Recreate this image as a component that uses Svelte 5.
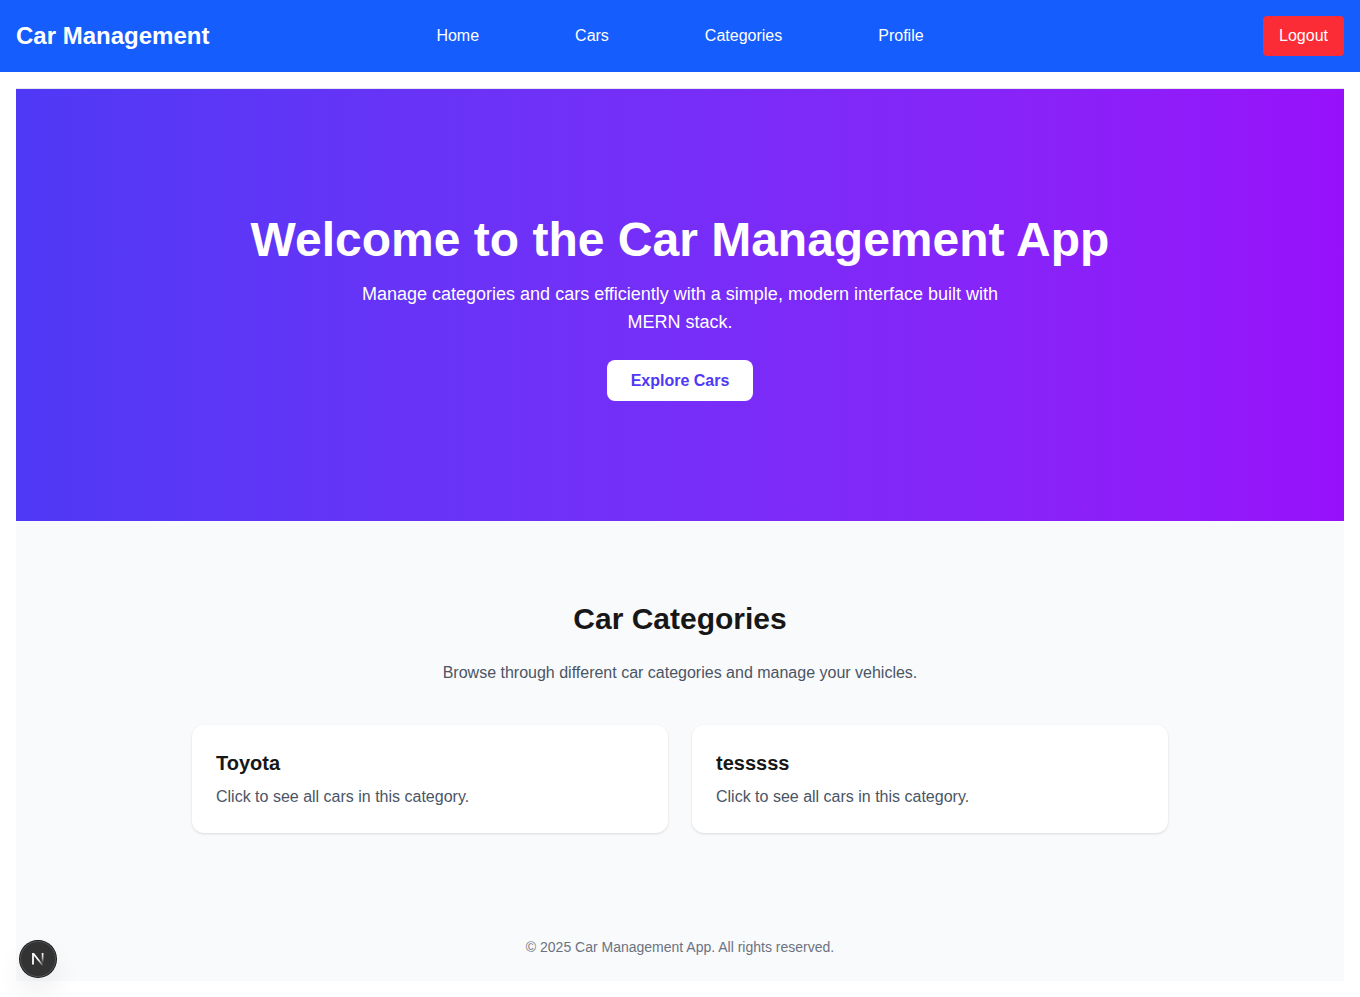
<script>
  const links = ['Home', 'Cars', 'Categories', 'Profile'];
  const categories = ['Toyota', 'tesssss'];
</script>

<nav class="navbar">
  <div class="brand">Car Management</div>
  <ul class="links">
    {#each links as link}
      <li><a href="#{link.toLowerCase()}">{link}</a></li>
    {/each}
  </ul>
  <button class="logout" type="button">Logout</button>
</nav>

<main class="page">
  <section class="hero">
    <h1>Welcome to the Car Management App</h1>
    <p>Manage categories and cars efficiently with a simple, modern interface built with MERN stack.</p>
    <a class="explore" href="#cars">Explore Cars</a>
  </section>

  <section class="categories">
    <h2>Car Categories</h2>
    <p class="intro">Browse through different car categories and manage your vehicles.</p>
    <div class="grid">
      {#each categories as category}
        <a class="card" href="#categories">
          <h3>{category}</h3>
          <p>Click to see all cars in this category.</p>
        </a>
      {/each}
    </div>
  </section>

  <footer>© 2025 Car Management App. All rights reserved.</footer>
</main>

<button class="devtools" type="button" aria-label="Open developer tools">
  <svg width="40" height="40" viewBox="0 0 40 40" fill="none" aria-hidden="true">
    <defs>
      <linearGradient id="stem" x1="0" y1="14" x2="0" y2="24" gradientUnits="userSpaceOnUse">
        <stop offset="0" stop-color="#fff" />
        <stop offset="0.4" stop-color="#fff" stop-opacity="0.75" />
        <stop offset="1" stop-color="#fff" stop-opacity="0" />
      </linearGradient>
      <linearGradient id="slant" x1="20" y1="21" x2="25" y2="27" gradientUnits="userSpaceOnUse">
        <stop offset="0" stop-color="#fff" />
        <stop offset="1" stop-color="#fff" stop-opacity="0.1" />
      </linearGradient>
    </defs>
    <path d="M14.2 14H16L25.6 26.2H23.6L15.4 16Z" fill="url(#slant)" />
    <path d="M15 25.5V14" stroke="#fff" stroke-width="1.8" />
    <path d="M24.6 14V25" stroke="url(#stem)" stroke-width="1.7" />
  </svg>
</button>

<style>
  :global(body) {
    margin: 0;
    background: #fff;
    color: #171717;
    font-family: Arial, "Liberation Sans", sans-serif;
    font-size: 16px;
    line-height: 24px;
  }

  h1, h2, h3, p, ul {
    margin: 0;
    padding: 0;
  }

  a {
    color: inherit;
    text-decoration: none;
  }

  .navbar {
    display: grid;
    grid-template-columns: 1fr auto 1fr;
    align-items: center;
    padding: 16px;
    background: #155dfc;
    color: #fff;
  }

  .brand {
    font-size: 24px;
    line-height: 32px;
    font-weight: 700;
  }

  .links {
    display: flex;
    gap: 96px;
    list-style: none;
  }

  .logout {
    justify-self: end;
    padding: 8px 16px;
    border: 0;
    border-radius: 4px;
    background: #fb2c36;
    color: #fff;
    font: inherit;
    cursor: pointer;
  }

  .page {
    padding: 16px;
  }

  .hero {
    display: flex;
    flex-direction: column;
    align-items: center;
    padding: 127px 16px 120px;
    border-top: 1px solid #e5e7eb;
    background: linear-gradient(to right in oklab, #4f39f6, #9810fa) padding-box;
    color: #fff;
    text-align: center;
  }

  h1 {
    margin-bottom: 16px;
    font-size: 48px;
    line-height: 48px;
  }

  .hero p {
    max-width: 672px;
    margin-bottom: 24px;
    font-size: 18px;
    line-height: 28px;
  }

  .explore {
    padding: 8px 24px;
    border-radius: 8px;
    background: #fff;
    color: #4f39f6;
    font-weight: 700;
    line-height: 25px;
  }

  .categories {
    padding: 80px 16px 64px;
    background: #f9fafb;
    text-align: center;
  }

  h2 {
    margin-bottom: 24px;
    font-size: 30px;
    line-height: 36px;
  }

  .intro {
    margin-bottom: 40px;
    color: #4a5565;
  }

  .grid {
    display: grid;
    grid-template-columns: repeat(2, minmax(0, 1fr));
    gap: 24px;
    max-width: 976px;
    margin: 0 auto;
    text-align: left;
  }

  .card {
    padding: 24px;
    border-radius: 12px;
    background: #fff;
    box-shadow: 0 1px 3px rgb(0 0 0 / 0.1), 0 1px 2px -1px rgb(0 0 0 / 0.1);
  }

  h3 {
    margin-bottom: 8px;
    font-size: 20px;
    line-height: 28px;
  }

  .card p {
    color: #4a5565;
  }

  footer {
    padding: 40px 16px 24px;
    background: #f9fafb;
    color: #6a7282;
    font-size: 14px;
    line-height: 20px;
    text-align: center;
  }

  .devtools {
    position: fixed;
    left: 20px;
    bottom: 20px;
    display: flex;
    align-items: center;
    justify-content: center;
    width: 36px;
    height: 36px;
    padding: 0;
    border: 0;
    border-radius: 50%;
    background: #333;
    box-shadow: 0 0 0 1px #171717, inset 0 0 0 1px #505050, 0 16px 32px -8px rgb(0 0 0 / 0.24);
    cursor: pointer;
  }

  .devtools svg {
    flex: none;
  }
</style>
